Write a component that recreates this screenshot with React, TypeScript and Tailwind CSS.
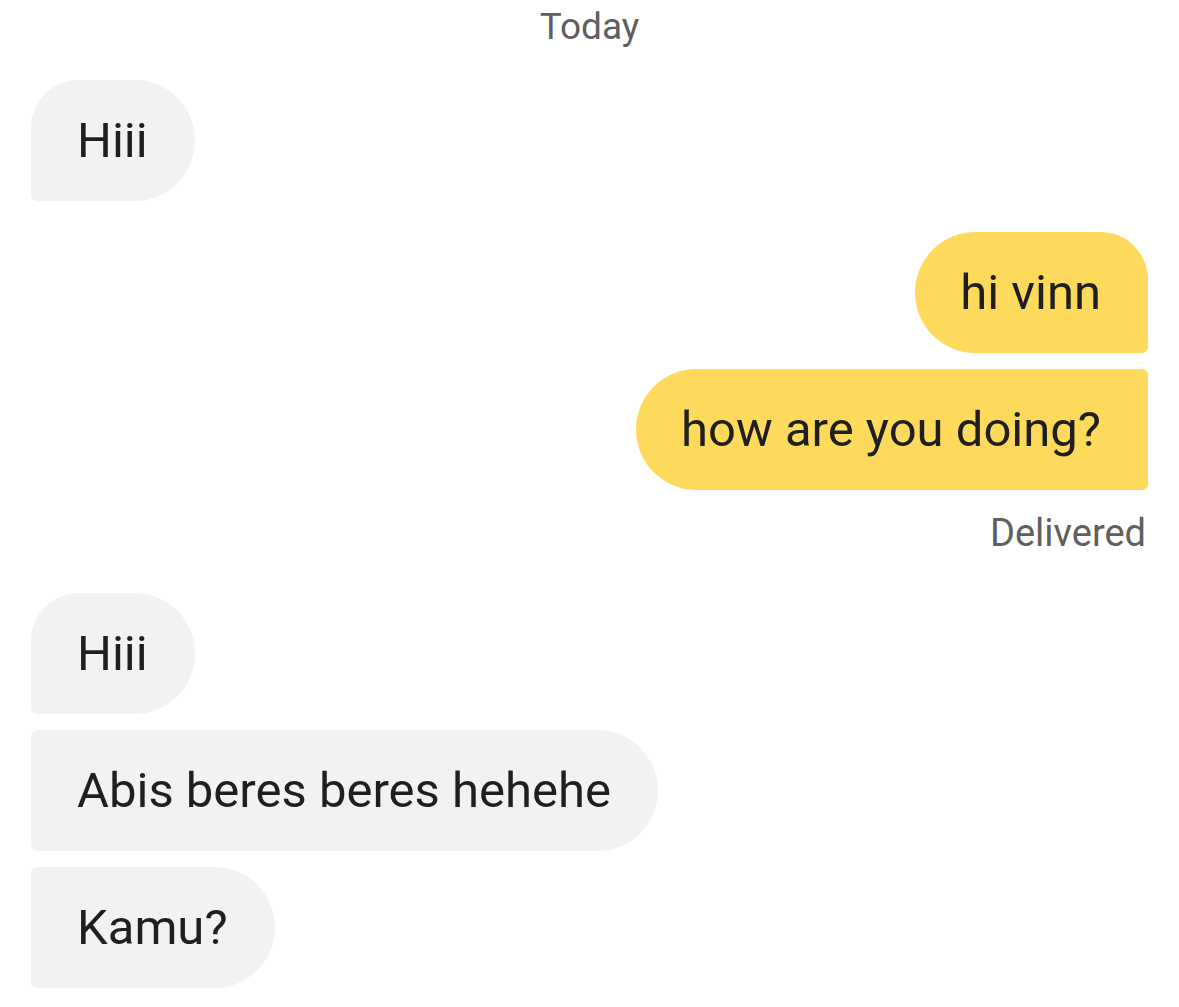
const font = { fontFamily: "Roboto, 'Noto Sans', sans-serif" }

type Msg = { text: string; first?: boolean }

const incomingTop: Msg[] = [{ text: "Hiii", first: true }]
const outgoing: Msg[] = [
  { text: "hi vinn", first: true },
  { text: "how are you doing?" },
]
const incomingBottom: Msg[] = [
  { text: "Hiii", first: true },
  { text: "Abis beres beres hehehe" },
  { text: "Kamu?" },
]

function Incoming({ msg }: { msg: Msg }) {
  return (
    <div
      className={`self-start bg-[#f2f2f2] text-[#1f1f1f] text-[49px] leading-[57px] py-[32px] pl-[46px] pr-[47px] rounded-r-[61px] rounded-bl-[6px] ${
        msg.first ? "rounded-tl-[48px]" : "rounded-tl-[6px]"
      }`}
    >
      {msg.text}
    </div>
  )
}

function Outgoing({ msg }: { msg: Msg }) {
  return (
    <div
      className={`self-end bg-[#fdda5c] text-[#1f1f1f] text-[49px] leading-[57px] py-[32px] pl-[45px] pr-[47px] rounded-l-[61px] rounded-br-[6px] ${
        msg.first ? "rounded-tr-[48px]" : "rounded-tr-[6px]"
      }`}
    >
      {msg.text}
    </div>
  )
}

export default function App() {
  return (
    <div className="min-h-screen bg-white px-[31px] pt-[5px] flex flex-col" style={font}>
      <div className="text-center text-[37px] leading-[44px] text-[#5f5f5f]">Today</div>

      {/* first incoming group */}
      <div className="mt-[31px] flex flex-col gap-[16px]">
        {incomingTop.map((m, i) => (
          <Incoming key={i} msg={m} />
        ))}
      </div>

      {/* outgoing group */}
      <div className="mt-[31px] flex flex-col gap-[16px]">
        {outgoing.map((m, i) => (
          <Outgoing key={i} msg={m} />
        ))}
      </div>
      <div className="self-end mt-[21px] text-[38px] leading-[44px] text-[#5f5f5f] pr-[2px]">Delivered</div>

      {/* second incoming group */}
      <div className="mt-[38px] flex flex-col gap-[16px]">
        {incomingBottom.map((m, i) => (
          <Incoming key={i} msg={m} />
        ))}
      </div>
    </div>
  )
}
